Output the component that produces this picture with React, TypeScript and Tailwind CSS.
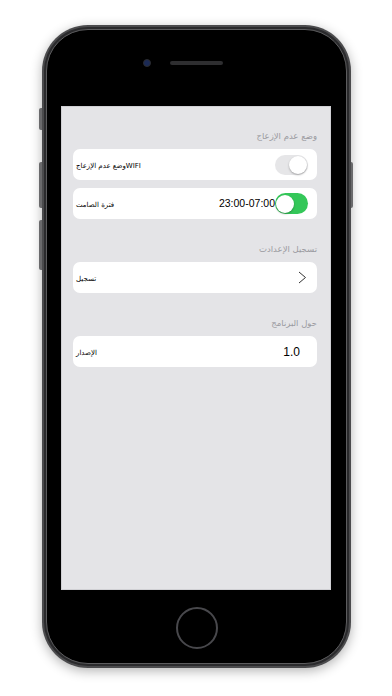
import React from "react";

const arabic = "font-['DejaVu_Sans','Noto_Sans',sans-serif]";
const latin = "font-['Liberation_Sans','Arial',sans-serif]";

const Toggle = ({ on }: { on: boolean }) => {
  return (
    <div
      className={
        on
          ? "w-[33px] h-[21px] rounded-full bg-[#34c759] flex items-center justify-start p-[1px]"
          : "w-[33px] h-[20px] rounded-full bg-[#e6e6e8] flex items-center justify-end p-[1px]"
      }
    >
      <div className="w-[18px] h-[18px] rounded-full bg-white shadow-[0_1px_2px_rgba(0,0,0,0.3)]" />
    </div>
  );
};

const Card = ({ children }: { children: React.ReactNode }) => {
  return (
    <div className="h-[31px] bg-white rounded-[7px] flex items-center justify-between pl-[3px] pr-[9px]">
      {children}
    </div>
  );
};

const Label = ({ text }: { text: string }) => (
  <span className={`${arabic} text-[7px] font-normal text-black leading-[12px] pt-[2px]`}>{text}</span>
);

const Section = ({ title, children }: { title: string; children: React.ReactNode }) => (
  <div className="flex flex-col">
    <div className={`${arabic} text-right text-[8.5px] leading-[12px] text-[#9a9aa0] mb-[7px]`}>
      {title}
    </div>
    <div className="flex flex-col gap-[8px]">{children}</div>
  </div>
);

export default function App() {
  return (
    <div className="w-[392px] h-[696px] bg-white pt-[25px] pl-[42px]">
      <div className="relative w-[309px] h-[643px]">
        {/* side buttons */}
        <div className="absolute left-[-3px] top-[83px] w-[3px] h-[22px] rounded-l-[2px] bg-[#6a6a6c]" />
        <div className="absolute left-[-3px] top-[137px] w-[3px] h-[46px] rounded-l-[2px] bg-[#6a6a6c]" />
        <div className="absolute left-[-3px] top-[195px] w-[3px] h-[50px] rounded-l-[2px] bg-[#6a6a6c]" />
        <div className="absolute right-[-2px] top-[137px] w-[2px] h-[46px] rounded-r-[2px] bg-[#6a6a6c]" />

        <div className="w-full h-full rounded-[46px] bg-[#4b4b4d] p-[2px] shadow-[0_3px_12px_rgba(0,0,0,0.3)]">
          <div className="w-full h-full rounded-[44px] bg-[#2a2a2c] p-[2px]">
            <div className="w-full h-full rounded-[42px] bg-black border border-[#5c5c5e] flex flex-col">
              {/* top bezel */}
              <div className="h-[76px] flex items-start justify-center pt-[31px]">
                <div className="w-[8px] h-[8px] rounded-full bg-[#1b2a55] border border-[#2b2b2e] mr-[19px] mt-[-2px]" />
                <div className="w-[53px] h-[4px] rounded-full bg-[#2e2e30]" />
                <div className="w-[27px]" />
              </div>

              {/* screen */}
              <div className="ml-[14px] w-[270px] h-[484px] bg-[#e4e4e7] border border-[#d0d0d4] pl-[11px] pr-[13px] pt-[23px] flex flex-col gap-[24px]">
                <Section title="وضع عدم الإزعاج">
                  <Card>
                    <Label text="وضع عدم الإزعاجWIFI" />
                    <Toggle on={false} />
                  </Card>
                  <Card>
                    <Label text="فترة الصامت" />
                    <div className="flex items-center">
                      <span className={`${latin} text-[10.5px] text-black`}>23:00-07:00</span>
                      <Toggle on={true} />
                    </div>
                  </Card>
                </Section>

                <Section title="تسجيل الإعدادت">
                  <Card>
                    <Label text="تسجيل" />
                    <svg width="9" height="13" viewBox="0 0 9 13" className="mr-[1px]">
                      <path d="M1 1 L7.5 6.5 L1 12" fill="none" stroke="#333" strokeWidth="1" />
                    </svg>
                  </Card>
                </Section>

                <Section title="حول البرنامج">
                  <Card>
                    <Label text="الإصدار" />
                    <span className={`${latin} text-[12px] text-black mr-[8px]`}>1.0</span>
                  </Card>
                </Section>
              </div>

              {/* bottom bezel */}
              <div className="flex-1 flex items-start justify-center pt-[17px]">
                <div className="w-[42px] h-[42px] rounded-full border-[2px] border-[#48484c]" />
              </div>
            </div>
          </div>
        </div>
      </div>
    </div>
  );
}
